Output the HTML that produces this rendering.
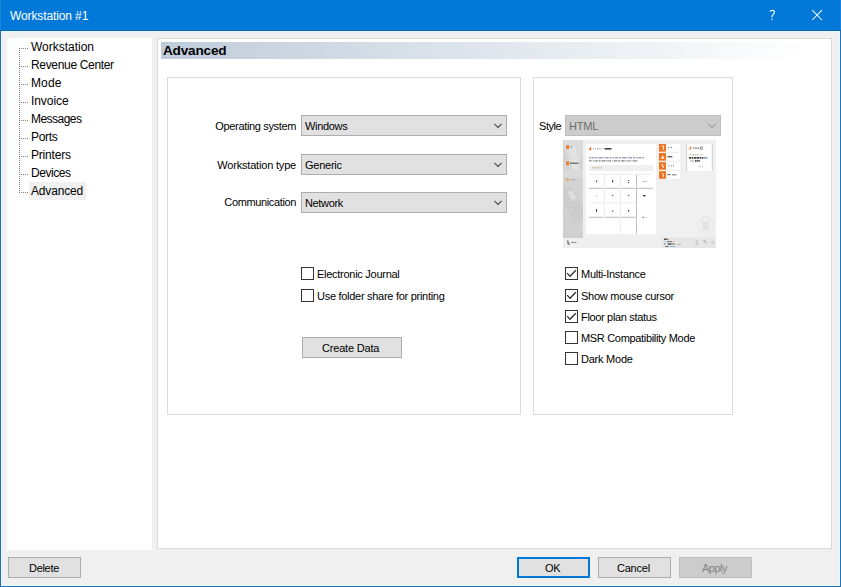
<!DOCTYPE html>
<html><head><meta charset="utf-8"><title>Workstation #1</title>
<style>
html,body{margin:0;padding:0;}
body{width:841px;height:587px;overflow:hidden;background:#f0f0f0;position:relative;font-family:"Liberation Sans", sans-serif;}
.t{position:absolute;white-space:nowrap;font-family:"Liberation Sans", sans-serif;}
.cb{position:absolute;width:11px;height:11px;border:1px solid #333;background:#fff;}
.combo{position:absolute;height:19px;border:1px solid #adadad;background:#e1e1e1;}
.btn{position:absolute;height:19px;border:1px solid #adadad;background:#e1e1e1;}
svg{position:absolute;overflow:visible;}
</style></head><body>
<div style="position:absolute;left:0px;top:0px;width:841px;height:30px;background:#0279d8;"></div>
<div style="position:absolute;left:0px;top:30px;width:841px;height:1px;background:#1560a8;"></div>
<div style="position:absolute;left:0px;top:31px;width:841px;height:1px;background:#d6fbff;"></div>
<div style="position:absolute;left:0px;top:32px;width:841px;height:1px;background:#e9f1f8;"></div>
<div style="position:absolute;left:0px;top:0px;width:1px;height:30px;background:#1a86dc;"></div>
<div style="position:absolute;left:840px;top:0px;width:1px;height:30px;background:#1a82dc;"></div>
<div style="position:absolute;left:0px;top:31px;width:1px;height:556px;background:#346b9c;"></div>
<div style="position:absolute;left:1px;top:32px;width:1px;height:554px;background:#d6fbff;"></div>
<div style="position:absolute;left:2px;top:33px;width:1px;height:552px;background:#e9f1f8;"></div>
<div style="position:absolute;left:840px;top:31px;width:1px;height:556px;background:#1f72bc;"></div>
<div style="position:absolute;left:839px;top:32px;width:1px;height:554px;background:#e6fbff;"></div>
<div style="position:absolute;left:0px;top:586px;width:841px;height:1px;background:#1f72bc;"></div>
<div style="position:absolute;left:2px;top:585px;width:838px;height:1px;background:#e6fbff;"></div>
<div style="position:absolute;left:0px;top:586px;width:1px;height:1px;background:#346b9c;"></div>
<span class="t" style="left:10px;top:9px;font-size:12px;line-height:14px;letter-spacing:-0.113px;color:#fff;">Workstation #1</span>
<svg style="left:812px;top:10px" width="11" height="11" viewBox="0 0 11 11"><path d="M0.2 0.2 L10 10 M10 0.2 L0.2 10" stroke="#fff" stroke-width="1.05" fill="none"/></svg>
<svg style="left:769px;top:9px" width="8" height="12" viewBox="0 0 8 12"><path d="M0.9 2.6 Q1.5 1.3 3.3 1.3 Q5.4 1.3 5.4 3.2 Q5.4 4.5 4.1 5.6 Q2.9 6.7 2.9 8.5" stroke="#fff" stroke-width="1.15" fill="none"/><rect x="2.3" y="9.9" width="1.2" height="1.2" fill="#fff"/></svg>
<div style="position:absolute;left:7px;top:38px;width:145px;height:512px;background:#fff;"></div>
<div style="position:absolute;left:19px;top:48px;width:1px;height:145px;background:repeating-linear-gradient(to bottom,#808080 0 1px,transparent 1px 2px);"></div>
<div style="position:absolute;left:20px;top:48px;width:8px;height:1px;background:repeating-linear-gradient(to right,transparent 0 1px,#808080 1px 2px);"></div>
<span class="t" style="left:31px;top:40px;font-size:12px;line-height:14px;letter-spacing:-0.013px;color:#000;">Workstation</span>
<div style="position:absolute;left:20px;top:66px;width:8px;height:1px;background:repeating-linear-gradient(to right,transparent 0 1px,#808080 1px 2px);"></div>
<span class="t" style="left:31px;top:58px;font-size:12px;line-height:14px;letter-spacing:-0.331px;color:#000;">Revenue Center</span>
<div style="position:absolute;left:20px;top:84px;width:8px;height:1px;background:repeating-linear-gradient(to right,transparent 0 1px,#808080 1px 2px);"></div>
<span class="t" style="left:31px;top:76px;font-size:12px;line-height:14px;letter-spacing:0.117px;color:#000;">Mode</span>
<div style="position:absolute;left:20px;top:102px;width:8px;height:1px;background:repeating-linear-gradient(to right,transparent 0 1px,#808080 1px 2px);"></div>
<span class="t" style="left:31px;top:94px;font-size:12px;line-height:14px;letter-spacing:-0.076px;color:#000;">Invoice</span>
<div style="position:absolute;left:20px;top:120px;width:8px;height:1px;background:repeating-linear-gradient(to right,transparent 0 1px,#808080 1px 2px);"></div>
<span class="t" style="left:31px;top:112px;font-size:12px;line-height:14px;letter-spacing:-0.525px;color:#000;">Messages</span>
<div style="position:absolute;left:20px;top:138px;width:8px;height:1px;background:repeating-linear-gradient(to right,transparent 0 1px,#808080 1px 2px);"></div>
<span class="t" style="left:31px;top:130px;font-size:12px;line-height:14px;letter-spacing:-0.303px;color:#000;">Ports</span>
<div style="position:absolute;left:20px;top:156px;width:8px;height:1px;background:repeating-linear-gradient(to right,transparent 0 1px,#808080 1px 2px);"></div>
<span class="t" style="left:31px;top:148px;font-size:12px;line-height:14px;letter-spacing:-0.199px;color:#000;">Printers</span>
<div style="position:absolute;left:20px;top:174px;width:8px;height:1px;background:repeating-linear-gradient(to right,transparent 0 1px,#808080 1px 2px);"></div>
<span class="t" style="left:31px;top:166px;font-size:12px;line-height:14px;letter-spacing:-0.455px;color:#000;">Devices</span>
<div style="position:absolute;left:20px;top:192px;width:8px;height:1px;background:repeating-linear-gradient(to right,transparent 0 1px,#808080 1px 2px);"></div>
<div style="position:absolute;left:29px;top:182px;width:57px;height:18px;background:#f0f0f0;"></div>
<span class="t" style="left:31px;top:184px;font-size:12px;line-height:14px;letter-spacing:-0.159px;color:#000;">Advanced</span>
<div style="position:absolute;left:157px;top:38px;width:673px;height:509px;background:#fff;border:1px solid #d9d9d9;"></div>
<div style="position:absolute;left:161px;top:42px;width:668px;height:17px;background:linear-gradient(to right,#bfccda 0%,#ffffff 97%);"></div>
<span class="t" style="left:163px;top:43px;font-size:13px;line-height:15px;letter-spacing:-0.2px;color:#000;font-weight:700;font-size:13.6px;transform:translateY(-0.5px);">Advanced</span>
<div style="position:absolute;left:167px;top:77px;width:352px;height:336px;border:1px solid #dcdcdc;background:#fff;"></div>
<div style="position:absolute;left:533px;top:77px;width:198px;height:336px;border:1px solid #dcdcdc;background:#fff;"></div>
<span class="t" style="right:545px;top:120px;font-size:11px;line-height:12px;letter-spacing:-0.347px;color:#000;">Operating system</span>
<span class="t" style="right:545px;top:159px;font-size:11px;line-height:12px;letter-spacing:-0.187px;color:#000;">Workstation type</span>
<span class="t" style="right:545px;top:196px;font-size:11px;line-height:12px;letter-spacing:-0.367px;color:#000;">Communication</span>
<div class="combo" style="left:301px;top:115px;width:204px;"></div>
<span class="t" style="left:305px;top:120px;font-size:11px;line-height:12px;letter-spacing:-0.318px;color:#000;">Windows</span>
<svg style="left:494px;top:123px" width="10" height="6" viewBox="0 0 10 6"><path d="M0.4 0.9 L4 4.4 L7.6 0.9" stroke="#444" stroke-width="1.05" fill="none"/></svg>
<div class="combo" style="left:301px;top:154px;width:204px;"></div>
<span class="t" style="left:305px;top:159px;font-size:11px;line-height:12px;letter-spacing:-0.254px;color:#000;">Generic</span>
<svg style="left:494px;top:162px" width="10" height="6" viewBox="0 0 10 6"><path d="M0.4 0.9 L4 4.4 L7.6 0.9" stroke="#444" stroke-width="1.05" fill="none"/></svg>
<div class="combo" style="left:301px;top:192px;width:204px;"></div>
<span class="t" style="left:305px;top:197px;font-size:11px;line-height:12px;letter-spacing:-0.349px;color:#000;">Network</span>
<svg style="left:494px;top:200px" width="10" height="6" viewBox="0 0 10 6"><path d="M0.4 0.9 L4 4.4 L7.6 0.9" stroke="#444" stroke-width="1.05" fill="none"/></svg>
<div class="cb" style="left:301px;top:267px;"></div>
<div class="cb" style="left:301px;top:289px;"></div>
<span class="t" style="left:317px;top:268px;font-size:11px;line-height:12px;letter-spacing:-0.274px;color:#000;">Electronic Journal</span>
<span class="t" style="left:317px;top:290px;font-size:11px;line-height:12px;letter-spacing:-0.284px;color:#000;">Use folder share for printing</span>
<div class="btn" style="left:302px;top:337px;width:98px;"></div>
<span class="t" style="left:322px;top:342px;font-size:11px;line-height:12px;letter-spacing:-0.192px;color:#000;">Create Data</span>
<span class="t" style="left:539px;top:120px;font-size:11px;line-height:12px;letter-spacing:-0.444px;color:#000;">Style</span>
<div class="combo" style="left:565px;top:115px;width:154px;background:#cccccc;border-color:#bfbfbf;"></div>
<span class="t" style="left:569px;top:120px;font-size:11px;line-height:12px;letter-spacing:-0.151px;color:#6d6d6d;">HTML</span>
<svg style="left:708px;top:123px" width="10" height="6" viewBox="0 0 10 6"><path d="M0.4 0.9 L4 4.4 L7.6 0.9" stroke="#a0a0a0" stroke-width="1.05" fill="none"/></svg>
<svg style="left:563px;top:140px;overflow:hidden" width="153" height="108" viewBox="0 0 153 108">
<rect x="0" y="0" width="154" height="108" fill="#f0f0f0"/>
<!-- sidebar photo -->
<rect x="0" y="0" width="20" height="98" fill="#d3d3d3"/>
<path d="M0 0 L20 0 L20 14 L12 30 L6 22 Z" fill="#dcdcdc"/>
<path d="M6 8 L12 6 L17 30 L10 34 Z" fill="#e3e3e3" opacity="0.8"/>
<rect x="0" y="30" width="20" height="8" fill="#dadada"/>
<path d="M0 50 L8 46 L20 66 L20 80 L12 84 L0 62 Z" fill="#cccccc"/>
<path d="M4 52 L9 50 L14 58 L9 61 Z" fill="#dddddd"/>
<path d="M0 70 L20 92 L20 98 L0 98 Z" fill="#d0d0d0"/>
<!-- sidebar icons -->
<rect x="3.2" y="5.2" width="2.8" height="3.8" fill="#ee7623"/>
<rect x="7" y="6.6" width="2.6" height="1" fill="#666" opacity="0.6"/>
<rect x="3.2" y="21.4" width="2.8" height="3.8" fill="#ee7623"/>
<rect x="7" y="22.6" width="8.5" height="1.2" fill="#333" opacity="0.75"/>
<rect x="3.2" y="38" width="2.6" height="3.2" fill="#f0a060" opacity="0.8"/>
<rect x="7" y="39.2" width="5.5" height="1" fill="#999" opacity="0.6"/>
<!-- main white card -->
<rect x="23" y="4" width="70" height="90" fill="#ffffff"/>
<path d="M26 8.2 L28.3 6.8 L28 10.8 L26.5 10.2 Z" fill="#ee7623"/>
<path d="M30 8.9 H39.5" stroke="#777" stroke-width="1.1" stroke-dasharray="1 1.2 0.8 1 1.6 0.9" opacity="0.7"/>
<rect x="41.5" y="8" width="7" height="1.6" fill="#222" opacity="0.85"/>
<path d="M26 17.8 H81" stroke="#2c3e6e" stroke-width="0.95" stroke-dasharray="1.6 0.8 3 0.9 2.2 1 4 0.8 1.2 0.7 3.4 1 2 0.9" opacity="0.75"/>
<path d="M26 20.9 H75" stroke="#222" stroke-width="0.95" stroke-dasharray="2.6 1.2 1 0.8 3.2 0.9 2 1 3.6 0.8 1.4 0.9" opacity="0.75"/>
<rect x="26" y="25" width="64" height="6" fill="#f0f0f0"/>
<rect x="29" y="27.4" width="10" height="0.9" fill="#b09060" opacity="0.6"/>
<!-- grid -->
<g stroke="#ebebeb" stroke-width="0.9">
<path d="M26 34.5 H90 M26 62.8 H73"/>
<path d="M41.3 35 V77 M57.5 35 V94"/>
</g>
<path d="M26 48.3 H40.6 M42 48.3 H56.8 M58.2 48.3 H72.8 M74.2 48.3 H90 M26 77.3 H40.6 M42 77.3 H56.8 M58.2 77.3 H72.8" stroke="#b4b4b4" stroke-width="0.9"/>
<path d="M73.5 35 V94" stroke="#c2c2c2" stroke-width="1"/>
<g fill="#222">
<rect x="33.2" y="40.4" width="0.9" height="1.8"/>
<rect x="49.2" y="40.2" width="1" height="2.2"/>
<rect x="65.2" y="40" width="1" height="1"/><rect x="65.2" y="42" width="1" height="1"/>
<rect x="80" y="41" width="1.2" height="0.8" opacity="0.6"/><rect x="82.5" y="41" width="1.2" height="0.8" opacity="0.6"/>
<rect x="33.2" y="55.4" width="0.8" height="1" opacity="0.6"/>
<rect x="49.2" y="54.9" width="1" height="1"/>
<rect x="65.2" y="54.9" width="1" height="1"/>
<rect x="80.2" y="55" width="2.2" height="1.4"/>
<rect x="33.1" y="69" width="0.9" height="2.8"/>
<rect x="49.2" y="70.6" width="1.1" height="1.1"/>
<rect x="65.2" y="70" width="1" height="1.6"/>
<rect x="79.2" y="76.8" width="2" height="0.9" opacity="0.7"/><rect x="82.6" y="76.8" width="0.9" height="0.9" opacity="0.5"/>
</g>
<!-- orange buttons -->
<g>
<rect x="96" y="4" width="21" height="7.6" fill="#fff"/><rect x="96" y="4" width="7" height="7.6" fill="#ee7623"/>
<rect x="96" y="13.05" width="21" height="7.6" fill="#fff"/><rect x="96" y="13.05" width="7" height="7.6" fill="#ee7623"/>
<rect x="96" y="22.1" width="21" height="7.6" fill="#fff"/><rect x="96" y="22.1" width="7" height="7.6" fill="#ee7623"/>
<rect x="96" y="31.15" width="21" height="7.6" fill="#fff"/><rect x="96" y="31.15" width="7" height="7.6" fill="#ee7623"/>
<g fill="#fff" opacity="0.9">
<path d="M98.3 5.8 H101 V9 L99.6 9.8 L98.6 9 H100 V6.6 H98.3 Z"/>
<path d="M99.6 14.8 L101.3 18.8 H98 Z"/>
<path d="M98.4 23.6 L99.4 23.6 L100 25.4 L101.2 27 L100.6 28 L99 26.2 Z"/>
<path d="M98.6 33 L100.2 33.4 L101.2 36.8 H99.6 L99.8 34.6 Z"/>
</g>
<g fill="#333">
<rect x="105" y="7" width="1" height="0.9" opacity="0.6"/><rect x="107.5" y="7" width="1.4" height="0.9" opacity="0.6"/>
<rect x="104.4" y="16" width="5" height="1.4" opacity="0.75"/>
<rect x="105.4" y="25.2" width="1" height="1.2" opacity="0.6"/><rect x="108" y="25" width="0.8" height="1.6" opacity="0.5"/><rect x="110" y="25" width="0.8" height="1.6" opacity="0.5"/>
<rect x="104.4" y="34" width="3.2" height="1.2" opacity="0.7"/><rect x="109" y="34.2" width="4.6" height="1.2" opacity="0.55"/>
</g>
</g>
<!-- right card -->
<rect x="123.4" y="4" width="26" height="27" fill="#fff"/>
<rect x="123.2" y="4" width="0.9" height="27" fill="#c8c8c8"/>
<rect x="148.8" y="4" width="0.9" height="27" fill="#c8c8c8"/>
<path d="M126 9.6 L127.6 6.4 L128.8 7 L127.4 9.8 Z" fill="#ee7623"/>
<rect x="130" y="7.6" width="6" height="1" fill="#444" opacity="0.7"/>
<circle cx="138.3" cy="8.2" r="1.3" fill="none" stroke="#333" stroke-width="0.6"/>
<path d="M126.6 14.8 H135.6" stroke="#7a3b1d" stroke-width="0.9" stroke-dasharray="1.4 0.7 0.8 0.6" opacity="0.6"/><rect x="137" y="14.4" width="3.6" height="0.9" fill="#d09040" opacity="0.5"/>
<path d="M126 17.9 H140" stroke="#111" stroke-width="1.7" stroke-dasharray="2.2 0.5 1.6 0.6 2.6 0.5" opacity="0.8"/><path d="M140.4 17.9 H144.6" stroke="#3a5a9a" stroke-width="1.7" stroke-dasharray="1.4 0.5" opacity="0.75"/>
<rect x="127.4" y="20.4" width="3.6" height="1.2" fill="#777" opacity="0.6"/><path d="M132 20.9 H137" stroke="#222" stroke-width="1.6" stroke-dasharray="1.6 0.5" opacity="0.8"/>
<rect x="136.6" y="26" width="0.9" height="0.9" fill="#555" opacity="0.7"/><rect x="139" y="26.6" width="0.9" height="0.9" fill="#555" opacity="0.5"/>
<!-- watermark logo -->
<ellipse cx="142.8" cy="85.7" rx="7.8" ry="9.4" fill="#efefef" stroke="#e3e3e3" stroke-width="0.9"/>
<path d="M139 81 H146.6 V89.6 Q142.8 92.6 139 89.6 Z" fill="#e3e3e3"/>
<ellipse cx="142.8" cy="80.8" rx="2" ry="0.6" fill="#f6f6f6"/>
<!-- bottom strip -->
<rect x="0" y="98" width="154" height="10" fill="#efefef"/>
<rect x="99" y="97.4" width="55" height="10.6" fill="#e6e6e6"/>
<path d="M4 100.4 L5.4 100.4 L6.2 104.8 H4.8 Z" fill="#555" opacity="0.8"/>
<rect x="5" y="103" width="1.8" height="2" fill="#888" opacity="0.7"/>
<rect x="8" y="102" width="5.4" height="0.9" fill="#555" opacity="0.7"/><rect x="14.6" y="102.2" width="0.7" height="0.7" fill="#888" opacity="0.6"/>
<rect x="101" y="98.6" width="3.4" height="1.4" fill="#222" opacity="0.8"/><rect x="105" y="98.8" width="1" height="1.2" fill="#d08030" opacity="0.8"/>
<rect x="101.4" y="101.2" width="1" height="0.9" fill="#5080b0" opacity="0.6"/><rect x="104" y="101.2" width="5" height="0.9" fill="#333" opacity="0.7"/><rect x="110" y="101.2" width="1" height="0.9" fill="#444" opacity="0.6"/>
<rect x="101" y="103.2" width="1.4" height="1.6" fill="#3a5a9a" opacity="0.6"/><rect x="104.6" y="103.2" width="4" height="1.6" fill="#222" opacity="0.7"/><rect x="109.4" y="103.2" width="2" height="1.6" fill="#444" opacity="0.6"/><rect x="112.4" y="103.6" width="0.8" height="1.2" fill="#d08030" opacity="0.6"/><rect x="114.6" y="104" width="0.8" height="0.8" fill="#222" opacity="0.7"/><rect x="116.6" y="104" width="0.8" height="0.8" fill="#222" opacity="0.7"/>
<rect x="102" y="106" width="3.6" height="1" fill="#333" opacity="0.65"/><rect x="106.6" y="106" width="6" height="1" fill="#5090c0" opacity="0.55"/>
<rect x="132.4" y="100" width="2.6" height="2.4" fill="#d0d0d0"/><rect x="132.8" y="103.6" width="1.8" height="0.9" fill="#777" opacity="0.7"/>
<path d="M140.4 100.8 L142.2 101 L143 103.4" stroke="#888" stroke-width="0.7" fill="none"/>
<rect x="148.4" y="101.6" width="2.6" height="0.8" fill="#999" opacity="0.8"/><rect x="148.8" y="103.8" width="1" height="0.7" fill="#aaa" opacity="0.8"/>
</svg>

<div class="cb" style="left:565px;top:267px;"></div>
<svg style="left:565px;top:267px" width="13" height="13" viewBox="0 0 13 13"><path d="M2.2 6.2 L5.0 9.3 L10.8 3.3" stroke="#2a2a2a" stroke-width="1.25" fill="none"/></svg>
<span class="t" style="left:581px;top:268px;font-size:11px;line-height:12px;letter-spacing:-0.274px;color:#000;">Multi-Instance</span>
<div class="cb" style="left:565px;top:289px;"></div>
<svg style="left:565px;top:289px" width="13" height="13" viewBox="0 0 13 13"><path d="M2.2 6.2 L5.0 9.3 L10.8 3.3" stroke="#2a2a2a" stroke-width="1.25" fill="none"/></svg>
<span class="t" style="left:581px;top:290px;font-size:11px;line-height:12px;letter-spacing:-0.248px;color:#000;">Show mouse cursor</span>
<div class="cb" style="left:565px;top:310px;"></div>
<svg style="left:565px;top:310px" width="13" height="13" viewBox="0 0 13 13"><path d="M2.2 6.2 L5.0 9.3 L10.8 3.3" stroke="#2a2a2a" stroke-width="1.25" fill="none"/></svg>
<span class="t" style="left:581px;top:311px;font-size:11px;line-height:12px;letter-spacing:-0.334px;color:#000;">Floor plan status</span>
<div class="cb" style="left:565px;top:331px;"></div>
<span class="t" style="left:581px;top:332px;font-size:11px;line-height:12px;letter-spacing:-0.32px;color:#000;">MSR Compatibility Mode</span>
<div class="cb" style="left:565px;top:352px;"></div>
<span class="t" style="left:581px;top:353px;font-size:11px;line-height:12px;letter-spacing:-0.233px;color:#000;">Dark Mode</span>
<div class="btn" style="left:8px;top:557px;width:71px;"></div>
<span class="t" style="left:29px;top:562px;font-size:11px;line-height:12px;letter-spacing:-0.299px;color:#000;">Delete</span>
<div class="btn" style="left:517px;top:557px;width:69px;border:2px solid #0078d7;height:17px;"></div>
<span class="t" style="left:545px;top:562px;font-size:11px;line-height:12px;letter-spacing:-0.353px;color:#000;">OK</span>
<div class="btn" style="left:598px;top:557px;width:71px;"></div>
<span class="t" style="left:617px;top:562px;font-size:11px;line-height:12px;letter-spacing:-0.225px;color:#000;">Cancel</span>
<div class="btn" style="left:679px;top:557px;width:71px;background:#cccccc;border-color:#bfbfbf;"></div>
<span class="t" style="left:702px;top:562px;font-size:11px;line-height:12px;letter-spacing:-0.526px;color:#838383;">Apply</span>
</body></html>
